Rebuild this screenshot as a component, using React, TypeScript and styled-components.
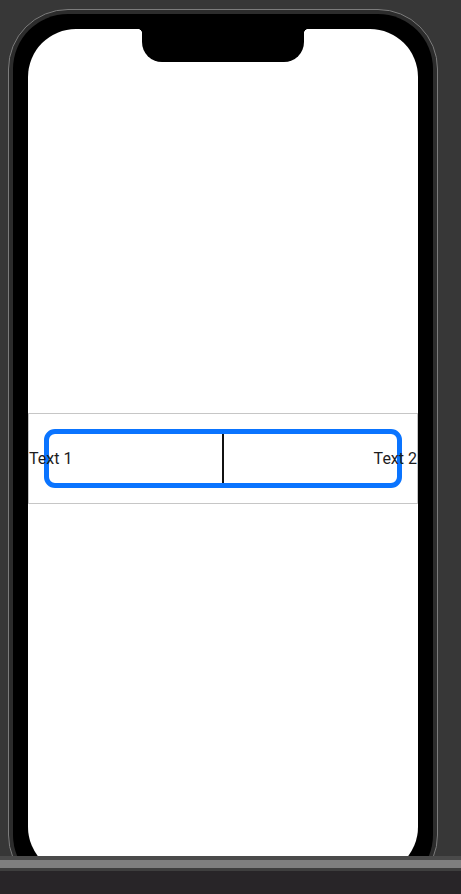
import styled, { createGlobalStyle } from "styled-components";

const GlobalStyle = createGlobalStyle`
  html, body {
    margin: 0;
    padding: 0;
    background: #373737;
    overflow: hidden;
  }
  body {
    font-family: Roboto, "Liberation Sans", sans-serif;
  }
`;

const Page = styled.div`
  display: flex;
  flex-direction: column;
  width: 100vw;
  height: 100vh;
`;

const Stage = styled.div`
  flex: 1;
  overflow: hidden;
  padding: 9px 0 0 8px;
`;

const Frame = styled.div`
  box-sizing: border-box;
  width: 430px;
  border: 1px solid #7c7c7c;
  border-radius: 60px;
  background: #2c2c2c;
  padding: 4px;
`;

const Bezel = styled.div`
  border-radius: 55px;
  background: #000;
  padding: 15px;
`;

const Screen = styled.div`
  display: flex;
  flex-direction: column;
  width: 390px;
  height: 846px;
  border-radius: 48px;
  background: #fff;
  overflow: hidden;
`;

const Notch = styled.div`
  position: relative;
  align-self: center;
  width: 162px;
  height: 33px;
  background: #000;
  border-radius: 0 0 20px 20px;

  &::before,
  &::after {
    content: "";
    position: absolute;
    top: 0;
    width: 5px;
    height: 5px;
  }
  &::before {
    left: -5px;
    background: radial-gradient(circle at 0 100%, transparent 5px, #000 5.5px);
  }
  &::after {
    right: -5px;
    background: radial-gradient(circle at 100% 100%, transparent 5px, #000 5.5px);
  }
`;

const SafeArea = styled.div`
  flex: 1;
  display: flex;
  align-items: center;
  padding: 14px 0 34px;
`;

const Cell = styled.div`
  display: grid;
  width: 100%;
  box-sizing: border-box;
  border: 1px solid #c6c6c6;
`;

const Segment = styled.div`
  grid-area: 1 / 1;
  display: flex;
  justify-content: center;
  height: 49px;
  margin: 15px;
  border: 5px solid #0a74ff;
  border-radius: 11px;
`;

const Divider = styled.div`
  width: 2px;
  background: #111;
`;

const Labels = styled.div`
  grid-area: 1 / 1;
  display: flex;
  align-items: center;
  justify-content: space-between;
  z-index: 1;
`;

const Label = styled.span`
  font-size: 16px;
  color: #1c1c1e;
  line-height: 1;
`;

const Bar = styled.div<{ $h: number; $c: string }>`
  flex: none;
  height: ${(p) => p.$h}px;
  background: ${(p) => p.$c};
`;

export default function App() {
  return (
    <Page>
      <GlobalStyle />
      <Stage>
        <Frame>
          <Bezel>
            <Screen>
              <Notch />
              <SafeArea>
                <Cell>
                  <Segment>
                    <Divider />
                  </Segment>
                  <Labels>
                    <Label>Text 1</Label>
                    <Label>Text 2</Label>
                  </Labels>
                </Cell>
              </SafeArea>
            </Screen>
          </Bezel>
        </Frame>
      </Stage>
      <Bar $h={4} $c="#4a4a4a" />
      <Bar $h={8} $c="#7f7f7f" />
      <Bar $h={3} $c="#3e3e3e" />
      <Bar $h={23} $c="#282528" />
    </Page>
  );
}
